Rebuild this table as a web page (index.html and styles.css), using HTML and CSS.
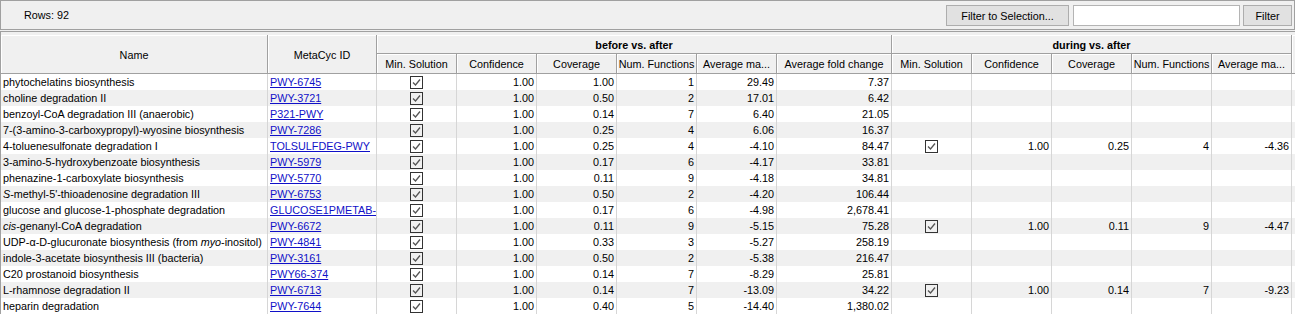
FILE: index.html
```html
<!DOCTYPE html>
<html>
<head>
<meta charset="utf-8">
<link rel="stylesheet" href="styles.css">
</head>
<body>
<div class="toolbar">
  <div class="rows-label">Rows: 92</div>
  <div class="btn btn-sel">Filter to Selection...</div>
  <div class="field"></div>
  <div class="btn btn-filter">Filter</div>
</div>
<div class="pane">
  <div class="head">
    <div class="h span2 c1">Name</div>
    <div class="h span2 c2">MetaCyc ID</div>
    <div class="h grp g1">before vs. after</div>
    <div class="h grp g2">during vs. after</div>
    <div class="h span2 c14"></div>
    <div class="h">Min. Solution</div>
    <div class="h">Confidence</div>
    <div class="h">Coverage</div>
    <div class="h">Num. Functions</div>
    <div class="h">Average ma...</div>
    <div class="h">Average fold change</div>
    <div class="h">Min. Solution</div>
    <div class="h">Confidence</div>
    <div class="h">Coverage</div>
    <div class="h">Num. Functions</div>
    <div class="h">Average ma...</div>
  </div>

  <div class="r">
    <div class="d">phytochelatins biosynthesis</div><div class="d"><a href="#">PWY-6745</a></div>
    <div class="d k"><svg class="cb" width="13" height="13" viewBox="0 0 13 13"><rect x="0.5" y="0.5" width="12" height="12"/><polyline points="3,6.5 5.5,9 10,3.5"/></svg></div>
    <div class="d n">1.00</div><div class="d n">1.00</div><div class="d n">1</div><div class="d n">29.49</div><div class="d n">7.37</div>
    <div class="d"></div><div class="d"></div><div class="d"></div><div class="d"></div><div class="d"></div><div class="d"></div>
  </div>
  <div class="r alt">
    <div class="d">choline degradation II</div><div class="d"><a href="#">PWY-3721</a></div>
    <div class="d k"><svg class="cb" width="13" height="13" viewBox="0 0 13 13"><rect x="0.5" y="0.5" width="12" height="12"/><polyline points="3,6.5 5.5,9 10,3.5"/></svg></div>
    <div class="d n">1.00</div><div class="d n">0.50</div><div class="d n">2</div><div class="d n">17.01</div><div class="d n">6.42</div>
    <div class="d"></div><div class="d"></div><div class="d"></div><div class="d"></div><div class="d"></div><div class="d"></div>
  </div>
  <div class="r">
    <div class="d">benzoyl-CoA degradation III (anaerobic)</div><div class="d"><a href="#">P321-PWY</a></div>
    <div class="d k"><svg class="cb" width="13" height="13" viewBox="0 0 13 13"><rect x="0.5" y="0.5" width="12" height="12"/><polyline points="3,6.5 5.5,9 10,3.5"/></svg></div>
    <div class="d n">1.00</div><div class="d n">0.14</div><div class="d n">7</div><div class="d n">6.40</div><div class="d n">21.05</div>
    <div class="d"></div><div class="d"></div><div class="d"></div><div class="d"></div><div class="d"></div><div class="d"></div>
  </div>
  <div class="r alt">
    <div class="d">7-(3-amino-3-carboxypropyl)-wyosine biosynthesis</div><div class="d"><a href="#">PWY-7286</a></div>
    <div class="d k"><svg class="cb" width="13" height="13" viewBox="0 0 13 13"><rect x="0.5" y="0.5" width="12" height="12"/><polyline points="3,6.5 5.5,9 10,3.5"/></svg></div>
    <div class="d n">1.00</div><div class="d n">0.25</div><div class="d n">4</div><div class="d n">6.06</div><div class="d n">16.37</div>
    <div class="d"></div><div class="d"></div><div class="d"></div><div class="d"></div><div class="d"></div><div class="d"></div>
  </div>
  <div class="r">
    <div class="d">4-toluenesulfonate degradation I</div><div class="d"><a href="#">TOLSULFDEG-PWY</a></div>
    <div class="d k"><svg class="cb" width="13" height="13" viewBox="0 0 13 13"><rect x="0.5" y="0.5" width="12" height="12"/><polyline points="3,6.5 5.5,9 10,3.5"/></svg></div>
    <div class="d n">1.00</div><div class="d n">0.25</div><div class="d n">4</div><div class="d n">-4.10</div><div class="d n">84.47</div>
    <div class="d k"><svg class="cb" width="13" height="13" viewBox="0 0 13 13"><rect x="0.5" y="0.5" width="12" height="12"/><polyline points="3,6.5 5.5,9 10,3.5"/></svg></div>
    <div class="d n">1.00</div><div class="d n">0.25</div><div class="d n">4</div><div class="d n">-4.36</div><div class="d"></div>
  </div>
  <div class="r alt">
    <div class="d">3-amino-5-hydroxybenzoate biosynthesis</div><div class="d"><a href="#">PWY-5979</a></div>
    <div class="d k"><svg class="cb" width="13" height="13" viewBox="0 0 13 13"><rect x="0.5" y="0.5" width="12" height="12"/><polyline points="3,6.5 5.5,9 10,3.5"/></svg></div>
    <div class="d n">1.00</div><div class="d n">0.17</div><div class="d n">6</div><div class="d n">-4.17</div><div class="d n">33.81</div>
    <div class="d"></div><div class="d"></div><div class="d"></div><div class="d"></div><div class="d"></div><div class="d"></div>
  </div>
  <div class="r">
    <div class="d">phenazine-1-carboxylate biosynthesis</div><div class="d"><a href="#">PWY-5770</a></div>
    <div class="d k"><svg class="cb" width="13" height="13" viewBox="0 0 13 13"><rect x="0.5" y="0.5" width="12" height="12"/><polyline points="3,6.5 5.5,9 10,3.5"/></svg></div>
    <div class="d n">1.00</div><div class="d n">0.11</div><div class="d n">9</div><div class="d n">-4.18</div><div class="d n">34.81</div>
    <div class="d"></div><div class="d"></div><div class="d"></div><div class="d"></div><div class="d"></div><div class="d"></div>
  </div>
  <div class="r alt">
    <div class="d"><i>S</i>-methyl-5'-thioadenosine degradation III</div><div class="d"><a href="#">PWY-6753</a></div>
    <div class="d k"><svg class="cb" width="13" height="13" viewBox="0 0 13 13"><rect x="0.5" y="0.5" width="12" height="12"/><polyline points="3,6.5 5.5,9 10,3.5"/></svg></div>
    <div class="d n">1.00</div><div class="d n">0.50</div><div class="d n">2</div><div class="d n">-4.20</div><div class="d n">106.44</div>
    <div class="d"></div><div class="d"></div><div class="d"></div><div class="d"></div><div class="d"></div><div class="d"></div>
  </div>
  <div class="r">
    <div class="d">glucose and glucose-1-phosphate degradation</div><div class="d"><a href="#">GLUCOSE1PMETAB-PWY</a></div>
    <div class="d k"><svg class="cb" width="13" height="13" viewBox="0 0 13 13"><rect x="0.5" y="0.5" width="12" height="12"/><polyline points="3,6.5 5.5,9 10,3.5"/></svg></div>
    <div class="d n">1.00</div><div class="d n">0.17</div><div class="d n">6</div><div class="d n">-4.98</div><div class="d n">2,678.41</div>
    <div class="d"></div><div class="d"></div><div class="d"></div><div class="d"></div><div class="d"></div><div class="d"></div>
  </div>
  <div class="r alt">
    <div class="d"><i>cis</i>-genanyl-CoA degradation</div><div class="d"><a href="#">PWY-6672</a></div>
    <div class="d k"><svg class="cb" width="13" height="13" viewBox="0 0 13 13"><rect x="0.5" y="0.5" width="12" height="12"/><polyline points="3,6.5 5.5,9 10,3.5"/></svg></div>
    <div class="d n">1.00</div><div class="d n">0.11</div><div class="d n">9</div><div class="d n">-5.15</div><div class="d n">75.28</div>
    <div class="d k"><svg class="cb" width="13" height="13" viewBox="0 0 13 13"><rect x="0.5" y="0.5" width="12" height="12"/><polyline points="3,6.5 5.5,9 10,3.5"/></svg></div>
    <div class="d n">1.00</div><div class="d n">0.11</div><div class="d n">9</div><div class="d n">-4.47</div><div class="d"></div>
  </div>
  <div class="r">
    <div class="d">UDP-α-D-glucuronate biosynthesis (from <i>myo</i>-inositol)</div><div class="d"><a href="#">PWY-4841</a></div>
    <div class="d k"><svg class="cb" width="13" height="13" viewBox="0 0 13 13"><rect x="0.5" y="0.5" width="12" height="12"/><polyline points="3,6.5 5.5,9 10,3.5"/></svg></div>
    <div class="d n">1.00</div><div class="d n">0.33</div><div class="d n">3</div><div class="d n">-5.27</div><div class="d n">258.19</div>
    <div class="d"></div><div class="d"></div><div class="d"></div><div class="d"></div><div class="d"></div><div class="d"></div>
  </div>
  <div class="r alt">
    <div class="d">indole-3-acetate biosynthesis III (bacteria)</div><div class="d"><a href="#">PWY-3161</a></div>
    <div class="d k"><svg class="cb" width="13" height="13" viewBox="0 0 13 13"><rect x="0.5" y="0.5" width="12" height="12"/><polyline points="3,6.5 5.5,9 10,3.5"/></svg></div>
    <div class="d n">1.00</div><div class="d n">0.50</div><div class="d n">2</div><div class="d n">-5.38</div><div class="d n">216.47</div>
    <div class="d"></div><div class="d"></div><div class="d"></div><div class="d"></div><div class="d"></div><div class="d"></div>
  </div>
  <div class="r">
    <div class="d">C20 prostanoid biosynthesis</div><div class="d"><a href="#">PWY66-374</a></div>
    <div class="d k"><svg class="cb" width="13" height="13" viewBox="0 0 13 13"><rect x="0.5" y="0.5" width="12" height="12"/><polyline points="3,6.5 5.5,9 10,3.5"/></svg></div>
    <div class="d n">1.00</div><div class="d n">0.14</div><div class="d n">7</div><div class="d n">-8.29</div><div class="d n">25.81</div>
    <div class="d"></div><div class="d"></div><div class="d"></div><div class="d"></div><div class="d"></div><div class="d"></div>
  </div>
  <div class="r alt">
    <div class="d">L-rhamnose degradation II</div><div class="d"><a href="#">PWY-6713</a></div>
    <div class="d k"><svg class="cb" width="13" height="13" viewBox="0 0 13 13"><rect x="0.5" y="0.5" width="12" height="12"/><polyline points="3,6.5 5.5,9 10,3.5"/></svg></div>
    <div class="d n">1.00</div><div class="d n">0.14</div><div class="d n">7</div><div class="d n">-13.09</div><div class="d n">34.22</div>
    <div class="d k"><svg class="cb" width="13" height="13" viewBox="0 0 13 13"><rect x="0.5" y="0.5" width="12" height="12"/><polyline points="3,6.5 5.5,9 10,3.5"/></svg></div>
    <div class="d n">1.00</div><div class="d n">0.14</div><div class="d n">7</div><div class="d n">-9.23</div><div class="d"></div>
  </div>
  <div class="r">
    <div class="d">heparin degradation</div><div class="d"><a href="#">PWY-7644</a></div>
    <div class="d k"><svg class="cb" width="13" height="13" viewBox="0 0 13 13"><rect x="0.5" y="0.5" width="12" height="12"/><polyline points="3,6.5 5.5,9 10,3.5"/></svg></div>
    <div class="d n">1.00</div><div class="d n">0.40</div><div class="d n">5</div><div class="d n">-14.40</div><div class="d n">1,380.02</div>
    <div class="d"></div><div class="d"></div><div class="d"></div><div class="d"></div><div class="d"></div><div class="d"></div>
  </div>
</div>
</body>
</html>
```
FILE: styles.css
```css
* { box-sizing: border-box; }
html, body { margin: 0; padding: 0; }
body {
  width: 1295px;
  height: 314px;
  overflow: hidden;
  background: #f0f0f0;
  font-family: "Liberation Sans", Arial, sans-serif;
  font-size: 10.8px;
  color: #000;
}
:root {
  --cols: 267px 109px 80px 80px 80px 80px 80px 115px 80px 80px 80px 80px 80px 40px;
}
.toolbar {
  height: 30px;
  border: 1px solid #a0a0a0;
  background: #f0f0f0;
  display: flex;
  align-items: flex-start;
  padding: 4px 2px 0 23px;
}
.rows-label { flex: 1; line-height: 20px; }
.btn {
  height: 21px;
  border: 1px solid #adadad;
  background: #e1e1e1;
  display: flex;
  align-items: center;
  justify-content: center;
}
.btn-sel { width: 123px; }
.btn-filter { width: 49px; }
.field {
  width: 167px;
  height: 21px;
  background: #fff;
  border: 1px solid #b4b4b4;
  margin: 0 3px 0 4px;
}
.pane {
  margin-top: 1px;
  border-top: 1px solid #a0a0a0;
  border-left: 1px solid #a0a0a0;
  width: 1340px;
  background: #fff;
}
.head {
  display: grid;
  grid-template-columns: var(--cols);
  grid-template-rows: 19px 20px;
  padding-top: 3px;
  background: #f0f0f0;
}
.h {
  background: #f0f0f0;
  border-right: 1px solid #a0a0a0;
  border-bottom: 1px solid #a0a0a0;
  box-shadow: inset 1px 1px 0 #ffffff;
  display: flex;
  align-items: center;
  justify-content: center;
  white-space: nowrap;
  overflow: hidden;
  padding-top: 1px;
}
.span2 { grid-row: 1 / span 2; }
.c1 { grid-column: 1; }
.c2 { grid-column: 2; }
.c14 { grid-column: 14; }
.grp { font-weight: bold; grid-row: 1; }
.g1 { grid-column: 3 / span 6; }
.g2 { grid-column: 9 / span 5; }
.r {
  display: grid;
  grid-template-columns: var(--cols);
  height: 16px;
  background: #fff;
}
.r.alt { background: #f0f0f0; }
.d {
  border-right: 1px solid #d6d6d6;
  padding: 0 2px 0 2px;
  line-height: 16px;
  white-space: nowrap;
  overflow: hidden;
}
.n { text-align: right; }
.k {
  display: flex;
  align-items: center;
  justify-content: center;
}
.d a { color: #1010c8; text-decoration: underline; }
.cb { display: block; }
.cb rect { fill: none; stroke: #333; stroke-width: 1; }
.cb polyline { fill: none; stroke: #555; stroke-width: 1.3; }
```
